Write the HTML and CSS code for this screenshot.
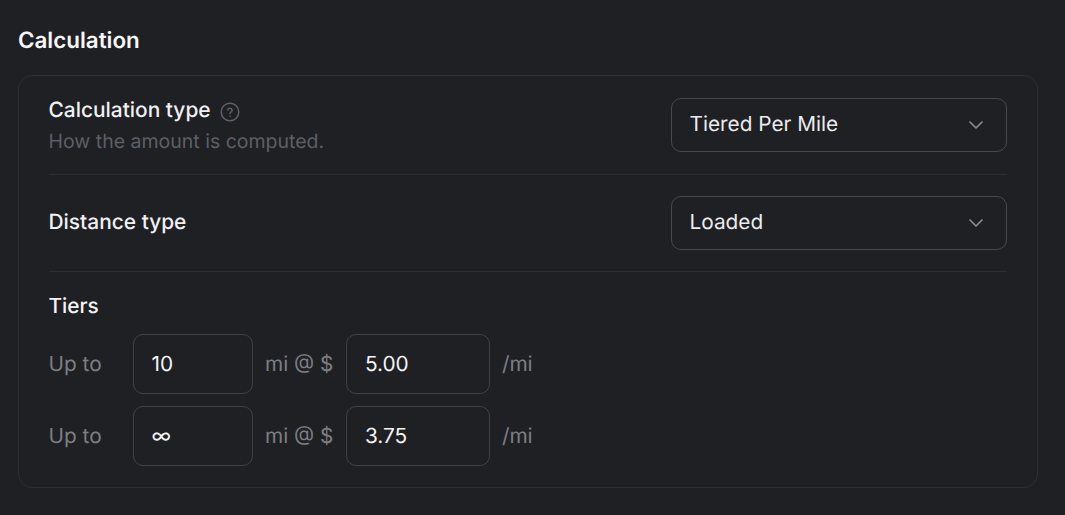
FILE: index.html
```html
<!DOCTYPE html>
<html lang="en">
<head>
    <meta charset="UTF-8">
    <meta name="viewport" content="width=device-width, initial-scale=1.0">
    <title>Calculation</title>
    <link rel="stylesheet" href="styles.css">
</head>
<body>
    <h2 class="title">Calculation</h2>
    <div class="card">
        <div class="row row-first">
            <div>
                <div class="label">
                    Calculation type
                    <svg class="help" width="20" height="20" viewBox="0 0 20 20" fill="none" stroke="#5f6166" stroke-width="1.5" stroke-linecap="round">
                        <circle cx="10" cy="10" r="8.8"/>
                        <path d="M7.7 7.9a2.3 2.3 0 0 1 4.5.4c0 1.5-2.2 1.9-2.2 3.1"/>
                        <path d="M10 14.1v.1"/>
                    </svg>
                </div>
                <div class="hint">How the amount is computed.</div>
            </div>
            <div class="select">
                Tiered Per Mile
                <svg class="chev" width="14" height="8" viewBox="0 0 14 8" fill="none" stroke="#8e8f93" stroke-width="1.6" stroke-linecap="round" stroke-linejoin="round"><path d="M1 1l6 6 6-6"/></svg>
            </div>
        </div>
        <div class="row row-second">
            <div class="label">Distance type</div>
            <div class="select">
                Loaded
                <svg class="chev" width="14" height="8" viewBox="0 0 14 8" fill="none" stroke="#8e8f93" stroke-width="1.6" stroke-linecap="round" stroke-linejoin="round"><path d="M1 1l6 6 6-6"/></svg>
            </div>
        </div>
        <div class="tiers">
            <div class="tiers-title">Tiers</div>
            <div class="tier">
                <span class="upto">Up to</span>
                <div class="field miles">10</div>
                <span class="unit">mi @ $</span>
                <div class="field rate">5.00</div>
                <span class="unit">/mi</span>
            </div>
            <div class="tier">
                <span class="upto">Up to</span>
                <div class="field miles">∞</div>
                <span class="unit">mi @ $</span>
                <div class="field rate">3.75</div>
                <span class="unit">/mi</span>
            </div>
        </div>
    </div>
</body>
</html>
```

FILE: styles.css
```css
* {
    box-sizing: border-box;
    margin: 0;
    padding: 0;
}
body {
    height: 515px;
    padding: 26px 27px 0 18px;
    overflow: hidden;
    background-color: #1f2024;
    font-family: Inter, "Liberation Sans", sans-serif;
    color: #f4f4f5;
    text-rendering: geometricPrecision;
}
.title {
    height: 30px;
    margin-bottom: 19px;
    font-size: 22.4px;
    line-height: 30px;
    font-weight: 600;
    color: #f7f7f8;
}
.card {
    height: 413px;
    padding: 0 30px;
    border: 1px solid #2e2f34;
    border-radius: 14px;
}
.row {
    display: flex;
    justify-content: space-between;
    align-items: center;
    border-bottom: 1px solid #2e2f34;
}
.row-first {
    height: 99px;
}
.row-second {
    height: 97px;
}
.label {
    display: flex;
    align-items: center;
    gap: 9px;
    font-size: 20.9px;
    line-height: 28px;
    font-weight: 500;
    color: #f1f1f3;
    margin-left: -0.5px;
}
.row-first .label {
    padding-top: 2px;
}
.help {
    margin-top: 1px;
}
.hint {
    margin-top: 2px;
    margin-left: -0.5px;
    font-size: 19.5px;
    line-height: 28px;
    color: #5d5f64;
}
.select {
    display: flex;
    justify-content: space-between;
    align-items: center;
    width: 336px;
    height: 54px;
    padding: 0 23px 2px 17.5px;
    border: 1px solid #48494e;
    border-radius: 10px;
    font-size: 20.8px;
    color: #ececee;
}
.chev {
    margin-top: 2px;
}
.tiers {
    padding-top: 21px;
}
.tiers-title {
    height: 28px;
    margin-bottom: 13px;
    margin-left: -0.5px;
    font-size: 20.8px;
    line-height: 28px;
    font-weight: 500;
}
.tier {
    display: flex;
    align-items: center;
    height: 60px;
    margin-bottom: 12px;
    font-size: 20.8px;
}
.upto {
    width: 84px;
    margin-left: -0.5px;
    margin-right: 0.5px;
    color: #7d7e83;
}
.unit {
    margin: 0 12px;
    color: #7d7e83;
}
.miles + .unit {
    margin-right: 13px;
}
.rate + .unit {
    margin-left: 11.5px;
}
.field {
    display: flex;
    align-items: center;
    height: 60px;
    padding-left: 17.5px;
    border: 1px solid #404146;
    border-radius: 10px;
    color: #f4f4f5;
}
.miles {
    width: 120px;
}
.rate {
    width: 144px;
}
```
